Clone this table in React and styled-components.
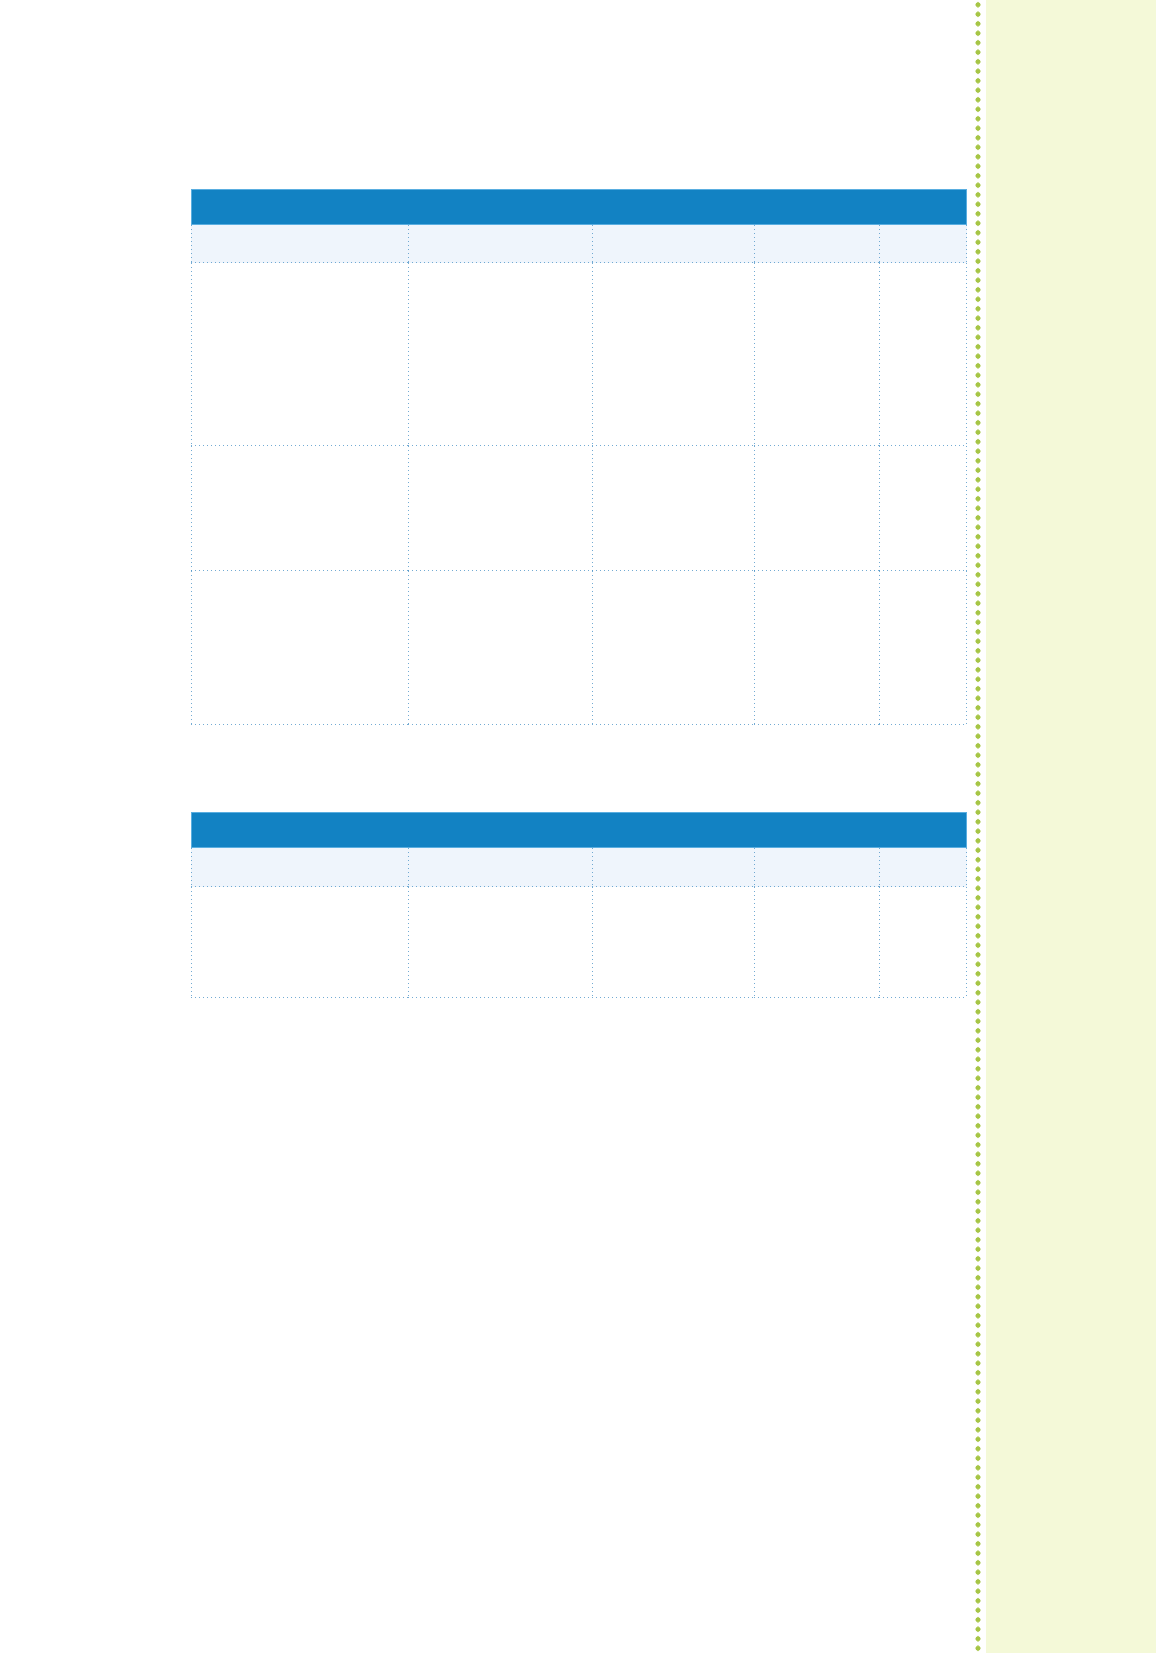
import React from "react"
import styled, { createGlobalStyle, css } from "styled-components"

const GlobalStyle = createGlobalStyle`
  html, body {
    margin: 0;
    padding: 0;
    background: #ffffff;
    font-family: "Liberation Sans", Arial, sans-serif;
  }
`

const LINE = "rgba(80, 150, 200, 0.8)"

const dotted = css`
  background-image:
    linear-gradient(to bottom, ${LINE} 1.4px, transparent 1.4px),
    linear-gradient(to right, ${LINE} 1.4px, transparent 1.4px)
    ${(p) => (p.$last ? `, linear-gradient(to bottom, ${LINE} 1.4px, transparent 1.4px)` : "")};
  background-size: 1px 4px, 4px 1px ${(p) => (p.$last ? ", 1px 4px" : "")};
  background-position: left top, left bottom ${(p) => (p.$last ? ", right top" : "")};
  background-repeat: repeat-y, repeat-x ${(p) => (p.$last ? ", repeat-y" : "")};
`

const Page = styled.div`
  display: flex;
  min-height: 1653px;
  width: 1156px;
`

const Main = styled.main`
  width: 776px;
  padding: 189px 3px 0 191px;
  display: flex;
  flex-direction: column;
  gap: 87px;
`

const DotRail = styled.div`
  width: 16px;
  background-image: radial-gradient(circle, #a6c545 2.3px, transparent 2.8px);
  background-size: 16px 9.5px;
  background-position: 0 0;
  background-repeat: repeat-y;
`

const Sidebar = styled.aside`
  flex: 1;
  background: #f4f9d8;
`

const Table = styled.section`
  display: grid;
  grid-template-columns: 217px 184px 162px 125px 88px;
`

const TitleBar = styled.div`
  grid-column: 1 / -1;
  height: 36px;
  background: #1282c3;
  box-shadow: inset 0 0 0 1px #5aaee0;
`

const HeadCell = styled.div`
  height: ${(p) => p.$h}px;
  background-color: #eff5fc;
  ${dotted}
`

const Cell = styled.div`
  height: ${(p) => p.$h}px;
  ${dotted}
`

const columns = [0, 1, 2, 3, 4]

const GridTable = ({ head, rows }) => (
  <Table>
    <TitleBar />
    {columns.map((c) => (
      <HeadCell key={`h${c}`} $h={head} $last={c === 4} />
    ))}
    {rows.map((h, r) =>
      columns.map((c) => <Cell key={`${r}-${c}`} $h={h} $last={c === 4} />)
    )}
  </Table>
)

const App = () => (
  <>
    <GlobalStyle />
    <Page>
      <Main>
        <GridTable head={38} rows={[183, 125, 154]} />
        <GridTable head={39} rows={[111]} />
      </Main>
      <DotRail />
      <Sidebar />
    </Page>
  </>
)

export default App
